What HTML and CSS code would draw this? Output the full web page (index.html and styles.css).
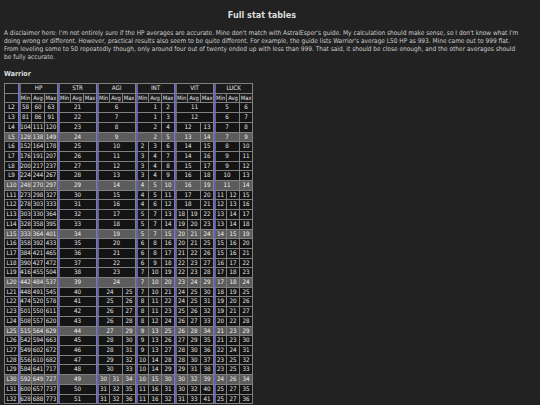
FILE: index.html
```html
<!DOCTYPE html>
<html>
<head>
<meta charset="utf-8">
<link rel="stylesheet" href="styles.css">
</head>
<body>
<div class="page">
<h1 class="title">Full stat tables</h1>
<p class="note">A disclaimer here: I'm not entirely sure if the HP averages are accurate. Mine don't match with AstralEsper's guide. My calculation should make sense, so I don't know what I'm doing wrong or different. However, practical results also seem to be quite different. For example, the guide lists Warrior's average L50 HP as 993. Mine came out to 999 flat. From leveling some to 50 repeatedly though, only around four out of twenty ended up with less than 999. That said, it should be close enough, and the other averages should be fully accurate.</p>
<h2 class="cls">Warrior</h2>
<table class="stats">
<colgroup><col class="c0"><col><col><col><col><col><col><col><col><col><col><col><col><col><col><col><col><col><col></colgroup>
<tr class="hd"><td class="lv"></td><td class="g" colspan="3">HP</td><td class="g" colspan="3">STR</td><td class="g" colspan="3">AGI</td><td class="g" colspan="3">INT</td><td class="g" colspan="3">VIT</td><td class="g" colspan="3">LUCK</td></tr>
<tr class="hd sub"><td class="lv"></td><td class="g">Min</td><td>Avg</td><td>Max</td><td class="g">Min</td><td>Avg</td><td>Max</td><td class="g">Min</td><td>Avg</td><td>Max</td><td class="g">Min</td><td>Avg</td><td>Max</td><td class="g">Min</td><td>Avg</td><td>Max</td><td class="g">Min</td><td>Avg</td><td>Max</td></tr>
<tr><td class="lv">L2</td><td class="g">58</td><td>60</td><td>63</td><td class="g" colspan="3">21</td><td class="g" colspan="3">6</td><td class="g off" colspan="2">1</td><td>2</td><td class="g" colspan="3">11</td><td class="g" colspan="2">5</td><td>6</td></tr>
<tr><td class="lv">L3</td><td class="g">81</td><td>86</td><td>91</td><td class="g" colspan="3">22</td><td class="g" colspan="3">7</td><td class="g off" colspan="2">1</td><td>3</td><td class="g" colspan="3">12</td><td class="g" colspan="2">6</td><td>7</td></tr>
<tr><td class="lv">L4</td><td class="g">104</td><td>111</td><td>120</td><td class="g" colspan="3">23</td><td class="g" colspan="3">8</td><td class="g off" colspan="2">2</td><td>4</td><td class="g" colspan="2">12</td><td>13</td><td class="g" colspan="2">7</td><td>8</td></tr>
<tr class="hl"><td class="lv">L5</td><td class="g">128</td><td>138</td><td>149</td><td class="g" colspan="3">24</td><td class="g" colspan="3">9</td><td class="g off" colspan="2">2</td><td>5</td><td class="g" colspan="2">13</td><td>14</td><td class="g" colspan="2">7</td><td>9</td></tr>
<tr><td class="lv">L6</td><td class="g">152</td><td>164</td><td>178</td><td class="g" colspan="3">25</td><td class="g" colspan="3">10</td><td class="g">2</td><td>3</td><td>6</td><td class="g" colspan="2">14</td><td>15</td><td class="g" colspan="2">8</td><td>10</td></tr>
<tr><td class="lv">L7</td><td class="g">176</td><td>191</td><td>207</td><td class="g" colspan="3">26</td><td class="g" colspan="3">11</td><td class="g">3</td><td>4</td><td>7</td><td class="g" colspan="2">14</td><td>16</td><td class="g" colspan="2">9</td><td>11</td></tr>
<tr><td class="lv">L8</td><td class="g">200</td><td>217</td><td>237</td><td class="g" colspan="3">27</td><td class="g" colspan="3">12</td><td class="g">3</td><td>4</td><td>8</td><td class="g" colspan="2">15</td><td>17</td><td class="g" colspan="2">9</td><td>12</td></tr>
<tr><td class="lv">L9</td><td class="g">224</td><td>244</td><td>267</td><td class="g" colspan="3">28</td><td class="g" colspan="3">13</td><td class="g">3</td><td>4</td><td>9</td><td class="g" colspan="2">16</td><td>18</td><td class="g" colspan="2">10</td><td>13</td></tr>
<tr class="hl"><td class="lv">L10</td><td class="g">248</td><td>270</td><td>297</td><td class="g" colspan="3">29</td><td class="g" colspan="3">14</td><td class="g">4</td><td>5</td><td>10</td><td class="g" colspan="2">16</td><td>19</td><td class="g" colspan="2">11</td><td>14</td></tr>
<tr><td class="lv">L11</td><td class="g">273</td><td>298</td><td>327</td><td class="g" colspan="3">30</td><td class="g" colspan="3">15</td><td class="g">4</td><td>5</td><td>11</td><td class="g" colspan="2">17</td><td>20</td><td class="g">11</td><td>12</td><td>15</td></tr>
<tr><td class="lv">L12</td><td class="g">278</td><td>303</td><td>333</td><td class="g" colspan="3">31</td><td class="g" colspan="3">16</td><td class="g">4</td><td>6</td><td>12</td><td class="g" colspan="2">18</td><td>21</td><td class="g">12</td><td>13</td><td>16</td></tr>
<tr><td class="lv">L13</td><td class="g">303</td><td>330</td><td>364</td><td class="g" colspan="3">32</td><td class="g" colspan="3">17</td><td class="g">5</td><td>7</td><td>13</td><td class="g">18</td><td>19</td><td>22</td><td class="g">13</td><td>14</td><td>17</td></tr>
<tr><td class="lv">L14</td><td class="g">328</td><td>358</td><td>395</td><td class="g" colspan="3">33</td><td class="g" colspan="3">18</td><td class="g">5</td><td>7</td><td>14</td><td class="g">19</td><td>20</td><td>23</td><td class="g">13</td><td>14</td><td>18</td></tr>
<tr class="hl"><td class="lv">L15</td><td class="g">333</td><td>364</td><td>401</td><td class="g" colspan="3">34</td><td class="g" colspan="3">19</td><td class="g">5</td><td>7</td><td>15</td><td class="g">20</td><td>21</td><td>24</td><td class="g">14</td><td>15</td><td>19</td></tr>
<tr><td class="lv">L16</td><td class="g">358</td><td>392</td><td>433</td><td class="g" colspan="3">35</td><td class="g" colspan="3">20</td><td class="g">6</td><td>8</td><td>16</td><td class="g">20</td><td>21</td><td>25</td><td class="g">15</td><td>16</td><td>20</td></tr>
<tr><td class="lv">L17</td><td class="g">384</td><td>421</td><td>465</td><td class="g" colspan="3">36</td><td class="g" colspan="3">21</td><td class="g">6</td><td>8</td><td>17</td><td class="g">21</td><td>22</td><td>26</td><td class="g">15</td><td>16</td><td>21</td></tr>
<tr><td class="lv">L18</td><td class="g">390</td><td>427</td><td>472</td><td class="g" colspan="3">37</td><td class="g" colspan="3">22</td><td class="g">6</td><td>9</td><td>18</td><td class="g">22</td><td>23</td><td>27</td><td class="g">16</td><td>17</td><td>22</td></tr>
<tr><td class="lv">L19</td><td class="g">416</td><td>455</td><td>504</td><td class="g" colspan="3">38</td><td class="g" colspan="3">23</td><td class="g">7</td><td>10</td><td>19</td><td class="g">22</td><td>23</td><td>28</td><td class="g">17</td><td>18</td><td>23</td></tr>
<tr class="hl"><td class="lv">L20</td><td class="g">442</td><td>484</td><td>537</td><td class="g" colspan="3">39</td><td class="g" colspan="3">24</td><td class="g">7</td><td>10</td><td>20</td><td class="g">23</td><td>24</td><td>29</td><td class="g">17</td><td>18</td><td>24</td></tr>
<tr><td class="lv">L21</td><td class="g">448</td><td>491</td><td>545</td><td class="g" colspan="3">40</td><td class="g" colspan="2">24</td><td>25</td><td class="g">7</td><td>10</td><td>21</td><td class="g">24</td><td>25</td><td>30</td><td class="g">18</td><td>19</td><td>25</td></tr>
<tr><td class="lv">L22</td><td class="g">474</td><td>520</td><td>578</td><td class="g" colspan="3">41</td><td class="g" colspan="2">25</td><td>26</td><td class="g">8</td><td>11</td><td>22</td><td class="g">24</td><td>25</td><td>31</td><td class="g">19</td><td>20</td><td>26</td></tr>
<tr><td class="lv">L23</td><td class="g">501</td><td>550</td><td>611</td><td class="g" colspan="3">42</td><td class="g" colspan="2">26</td><td>27</td><td class="g">8</td><td>11</td><td>23</td><td class="g">25</td><td>26</td><td>32</td><td class="g">19</td><td>21</td><td>27</td></tr>
<tr><td class="lv">L24</td><td class="g">508</td><td>557</td><td>620</td><td class="g" colspan="3">43</td><td class="g" colspan="2">26</td><td>28</td><td class="g">8</td><td>12</td><td>24</td><td class="g">26</td><td>27</td><td>33</td><td class="g">20</td><td>22</td><td>28</td></tr>
<tr class="hl"><td class="lv">L25</td><td class="g">515</td><td>564</td><td>629</td><td class="g" colspan="3">44</td><td class="g" colspan="2">27</td><td>29</td><td class="g">9</td><td>13</td><td>25</td><td class="g">26</td><td>28</td><td>34</td><td class="g">21</td><td>23</td><td>29</td></tr>
<tr><td class="lv">L26</td><td class="g">542</td><td>594</td><td>663</td><td class="g" colspan="3">45</td><td class="g" colspan="2">28</td><td>30</td><td class="g">9</td><td>13</td><td>26</td><td class="g">27</td><td>29</td><td>35</td><td class="g">21</td><td>23</td><td>30</td></tr>
<tr><td class="lv">L27</td><td class="g">549</td><td>602</td><td>672</td><td class="g" colspan="3">46</td><td class="g" colspan="2">28</td><td>31</td><td class="g">9</td><td>13</td><td>27</td><td class="g">28</td><td>30</td><td>36</td><td class="g">22</td><td>24</td><td>31</td></tr>
<tr><td class="lv">L28</td><td class="g">556</td><td>610</td><td>682</td><td class="g" colspan="3">47</td><td class="g" colspan="2">29</td><td>32</td><td class="g">10</td><td>14</td><td>28</td><td class="g">28</td><td>30</td><td>37</td><td class="g">23</td><td>25</td><td>32</td></tr>
<tr><td class="lv">L29</td><td class="g">584</td><td>641</td><td>717</td><td class="g" colspan="3">48</td><td class="g" colspan="2">30</td><td>33</td><td class="g">10</td><td>14</td><td>29</td><td class="g">29</td><td>31</td><td>38</td><td class="g">23</td><td>25</td><td>33</td></tr>
<tr class="hl"><td class="lv">L30</td><td class="g">592</td><td>649</td><td>727</td><td class="g" colspan="3">49</td><td class="g">30</td><td>31</td><td>34</td><td class="g">10</td><td>15</td><td>30</td><td class="g">30</td><td>32</td><td>39</td><td class="g">24</td><td>26</td><td>34</td></tr>
<tr><td class="lv">L31</td><td class="g">600</td><td>657</td><td>737</td><td class="g" colspan="3">50</td><td class="g">31</td><td>32</td><td>35</td><td class="g">11</td><td>16</td><td>31</td><td class="g">30</td><td>32</td><td>40</td><td class="g">25</td><td>27</td><td>35</td></tr>
<tr><td class="lv">L32</td><td class="g">628</td><td>688</td><td>773</td><td class="g" colspan="3">51</td><td class="g">31</td><td>32</td><td>36</td><td class="g">11</td><td>16</td><td>32</td><td class="g">31</td><td>33</td><td>41</td><td class="g">25</td><td>27</td><td>36</td></tr>
</table>
</div>
</body>
</html>
```

FILE: styles.css
```css
html, body {
  margin: 0;
  padding: 0;
  background: #222222;
}
.page {
  padding: 0 20px 0 4px;
  font-family: "DejaVu Sans Condensed", "DejaVu Sans", sans-serif;
  font-stretch: condensed;
  color: #cccccc;
}
.title {
  margin: 0;
  padding-top: 9px;
  text-align: center;
  font-size: 9px;
  line-height: 12px;
  font-weight: bold;
  color: #dddddd;
}
.note {
  margin: 8px 0 0;
  font-size: 6.5px;
  line-height: 8px;
}
.cls {
  margin: 9px 0 0;
  font-size: 7px;
  line-height: 9px;
  font-weight: bold;
  color: #dddddd;
}
.stats {
  margin-top: 4px;
  border-collapse: separate;
  border-spacing: 0;
  table-layout: fixed;
  width: 248px;
  border-left: 1px solid #808080;
  border-top: 1px solid #808080;
  font-size: 6.2px;
  color: #e6e6e6;
}
.stats col { width: 13px; }
.stats col.c0 { width: 14px; }
.stats td {
  padding: 0;
  height: 8.7px;
  line-height: 8.7px;
  text-align: center;
  white-space: nowrap;
  overflow: hidden;
  background: #141414;
  border-right: 1px solid #808080;
  border-bottom: 1px solid #808080;
}
.stats td.g {
  border-left: 1px solid #5a5aee;
  box-shadow: inset 1px 0 0 #666666;
}
.stats td.off {
  text-align: right;
  padding-right: 4px;
}
.stats tr.hd td {
  background: #1a1a1a;
}
.stats tr.sub td {
  font-size: 5.8px;
}
.stats tr.hl td {
  background: #5c5c5c;
  color: #f0f0f0;
}
```
